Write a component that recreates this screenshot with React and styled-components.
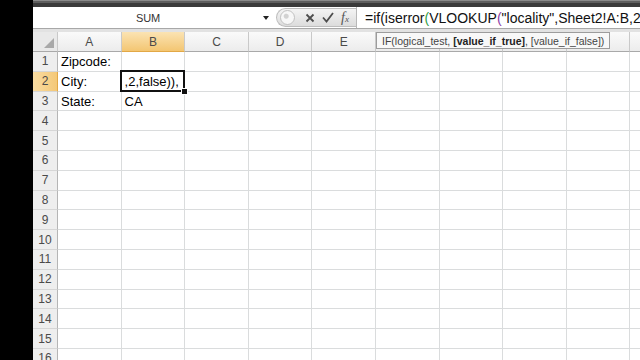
import React from "react";
import styled, { createGlobalStyle } from "styled-components";

const GlobalStyle = createGlobalStyle`
  html, body {
    margin: 0;
    padding: 0;
    background: #000;
  }
  body {
    width: 640px;
    height: 360px;
    overflow: hidden;
    font-family: "Liberation Sans", Arial, sans-serif;
  }
`;

const COLS = ["A", "B", "C", "D", "E", "F", "G", "H", "I", "J"];
const ROWS = 16;

// cell contents keyed by "col+row"
const data = {
  A1: "Zipcode:",
  A2: "City:",
  A3: "State:",
  B2: ",2,false)),",
  B3: "CA",
};

const active = { col: "B", row: 2 };

export default function App() {
  return (
    <>
      <GlobalStyle />
      <Screen>
        <Bezel />
        <Window>
          <RibbonEdge />
          <FormulaBar>
            <NameBox>
              <NameText>SUM</NameText>
              <DropArrow />
            </NameBox>
            <ButtonPill>
              <Knob />
              <PillIcon>
                <svg width="10" height="10" viewBox="0 0 10 10">
                  <path d="M1.5 1.5 L8.5 8.5 M8.5 1.5 L1.5 8.5" stroke="#4d4d4d" strokeWidth="1.8" />
                </svg>
              </PillIcon>
              <PillIcon>
                <svg width="12" height="11" viewBox="0 0 12 11">
                  <path d="M1 5.5 L4.5 9.5 L11 1" stroke="#4d4d4d" strokeWidth="1.8" fill="none" />
                </svg>
              </PillIcon>
              <Fx>
                f<small>x</small>
              </Fx>
            </ButtonPill>
            <FormulaInput>
              =if(iserror<Paren $c="#2f9e44">(</Paren>VLOOKUP<Paren $c="#8e3fa8">(</Paren>"locality",Sheet2!A:B,2,false)),
            </FormulaInput>
          </FormulaBar>
          <Divider />
          <Sheet>
            <Corner>
              <svg width="10" height="10" viewBox="0 0 10 10">
                <path d="M10 0 L10 10 L0 10 Z" fill="#a9a9a9" />
              </svg>
            </Corner>
            {COLS.map((c) => (
              <ColHeader key={c} $active={c === active.col}>
                {c}
              </ColHeader>
            ))}
            {Array.from({ length: ROWS }, (_, i) => i + 1).map((r) => (
              <React.Fragment key={r}>
                <RowHeader $active={r === active.row}>{r}</RowHeader>
                {COLS.map((c) => (
                  <Cell key={c + r} $selected={c === active.col && r === active.row}>
                    {data[c + r]}
                  </Cell>
                ))}
              </React.Fragment>
            ))}
          </Sheet>
          <Tip>
            IF(logical_test, <b>[value_if_true]</b>, [value_if_false])
          </Tip>
        </Window>
      </Screen>
    </>
  );
}

const Screen = styled.div`
  display: flex;
  width: 640px;
  height: 360px;
  overflow: hidden;
  background: #000;
`;

const Bezel = styled.div`
  width: 33px;
  flex: none;
  background: #000;
`;

const Window = styled.div`
  position: relative;
  flex: 1;
  min-width: 0;
  display: flex;
  flex-direction: column;
  background: #fff;
  overflow: hidden;
`;

const RibbonEdge = styled.div`
  height: 7px;
  flex: none;
  background: linear-gradient(#8a8a8a 0 1px, #5e5e5e 1px 3px, #3a3a3a 3px);
`;

const FormulaBar = styled.div`
  height: 21px;
  flex: none;
  display: flex;
  align-items: center;
  background: #fff;
  border-bottom: 1px solid #a8a8a8;
`;

const NameBox = styled.div`
  width: 243px;
  height: 100%;
  flex: none;
  display: flex;
  align-items: center;
`;

const NameText = styled.span`
  flex: 1;
  text-align: center;
  font-size: 11px;
  color: #333;
  letter-spacing: -0.2px;
`;

const DropArrow = styled.span`
  width: 0;
  height: 0;
  margin-right: 7px;
  border-left: 3.5px solid transparent;
  border-right: 3.5px solid transparent;
  border-top: 4px solid #222;
`;

const ButtonPill = styled.div`
  width: 80px;
  height: 19px;
  flex: none;
  display: flex;
  align-items: center;
  gap: 7px;
  padding-left: 3px;
  box-sizing: border-box;
  border-radius: 10px 0 0 10px;
  background: linear-gradient(#f4f4f4, #dcdcdc);
  border: 1px solid #bdbdbd;
  border-right: none;
`;

const Knob = styled.span`
  width: 13px;
  height: 13px;
  border-radius: 50%;
  background: radial-gradient(circle at 40% 40%, #d2d2d2 0 2px, #f7f7f7 3px);
  border: 1px solid #c2c2c2;
  margin-right: 3px;
`;

const PillIcon = styled.span`
  display: flex;
  align-items: center;
`;

const Fx = styled.span`
  font-family: "Liberation Serif", "Times New Roman", serif;
  font-style: italic;
  font-size: 14px;
  color: #555;
  small {
    font-size: 9px;
  }
`;

const FormulaInput = styled.div`
  flex: 1;
  height: 100%;
  display: flex;
  align-items: center;
  padding-left: 8px;
  border-left: 1px solid #b8b8b8;
  font-size: 14px;
  color: #111;
  white-space: nowrap;
  overflow: hidden;
`;

const Paren = styled.span`
  color: ${(p) => p.$c};
`;

const Divider = styled.div`
  height: 3px;
  flex: none;
  background: #e2e2e2;
`;

const Sheet = styled.div`
  display: grid;
  grid-template-columns: 25px repeat(${COLS.length}, 63.6px);
  grid-template-rows: 20px repeat(${ROWS}, 19.8px);
  font-size: 13px;
`;

const HeaderBase = styled.div`
  display: flex;
  align-items: center;
  justify-content: center;
  box-sizing: border-box;
  font-size: 12px;
  color: #4a4a4a;
  border-right: 1px solid #c9c9c9;
  border-bottom: 1px solid #c4c4c4;
`;

const Corner = styled(HeaderBase)`
  background: #e9e9e9;
  justify-content: flex-end;
  align-items: flex-end;
  padding: 0 3px 3px 0;
  border-bottom-color: #a9a9a9;
`;

const ColHeader = styled(HeaderBase)`
  background: ${(p) =>
    p.$active
      ? "linear-gradient(#fbe3b3, #f3c672)"
      : "linear-gradient(#fafafa, #ececec)"};
  border-bottom-color: ${(p) => (p.$active ? "#e2a846" : "#a9a9a9")};
`;

const RowHeader = styled(HeaderBase)`
  background: ${(p) => (p.$active ? "linear-gradient(90deg, #f9dca2, #f4c877)" : "#eeeeee")};
  border-right-color: ${(p) => (p.$active ? "#e2a846" : "#b5b5b5")};
  border-bottom-color: #d6d6d6;
`;

const Cell = styled.div`
  position: relative;
  box-sizing: border-box;
  padding-left: 3px;
  line-height: 19px;
  white-space: nowrap;
  color: #000;
  border-right: 1px solid #dadcdd;
  border-bottom: 1px solid #dadcdd;
  z-index: ${(p) => (p.$selected ? 2 : "auto")};

  ${(p) =>
    p.$selected &&
    `
    &::before {
      content: "";
      position: absolute;
      inset: -2px -1px -1px -2px;
      border: 2px solid #111;
    }
    &::after {
      content: "";
      position: absolute;
      right: -4px;
      bottom: -4px;
      width: 5px;
      height: 5px;
      background: #111;
      border: 1px solid #fff;
    }
  `}
`;

const Tip = styled.div`
  position: absolute;
  top: 32px;
  left: 343px;
  height: 15px;
  padding: 0 5px;
  display: flex;
  align-items: center;
  background: #f8f8f8;
  border: 1px solid #9c9c9c;
  font-size: 10.5px;
  color: #444;
  white-space: pre;
  b {
    color: #222;
  }
`;
